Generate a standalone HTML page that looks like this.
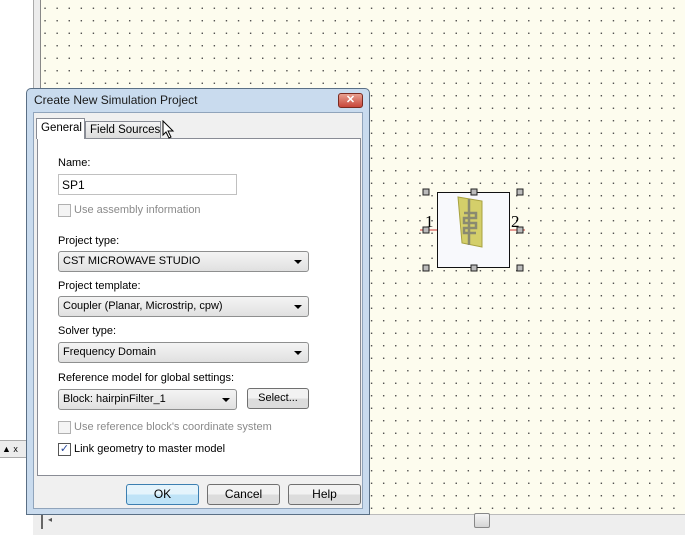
<!DOCTYPE html>
<html><head><style>
*{box-sizing:border-box;margin:0;padding:0}
body{width:685px;height:535px;position:relative;overflow:hidden;background:#fff;font-family:"Liberation Sans",sans-serif;font-size:12px;color:#000}
.canvas{position:absolute;left:41px;top:0;width:644px;height:514px;background-color:#fdfcee;background-image:radial-gradient(circle,#444 0.6px,transparent 0.9px);background-size:12.1px 12.5px;background-position:-2px 2px}
.vbar{position:absolute;left:33px;top:0;width:8px;height:535px;background:#ececec;border-left:1px solid #aaa;border-right:1px solid #888}
.abs{position:absolute}
.dlg{position:absolute;left:26px;top:88px;width:344px;height:427px;background:#c9dbee;border:1px solid #5a6f85;border-radius:5px 5px 0 0}
.title{position:absolute;left:7px;top:4px;font-size:12px;color:#1a1a1a}
.close{position:absolute;left:311px;top:4px;width:25px;height:15px;background:linear-gradient(#e8a090,#c8463a);border:1px solid #7a2a20;border-radius:3px;color:#fff;font-size:11px;text-align:center;line-height:13px;font-weight:bold}
.inner{position:absolute;left:6px;top:23px;width:330px;height:397px;background:#f0f0f0;border:1px solid #90a4bb}
.panel{position:absolute;left:3px;top:25px;width:324px;height:338px;background:#fff;border:1px solid #898c95}
.tab{position:absolute;height:20px;border:1px solid #898c95;border-bottom:none;padding:3px 4px;font-size:11.5px;white-space:nowrap}
.lbl{position:absolute;font-size:11px;white-space:nowrap}
.combo{position:absolute;height:21px;border:1px solid #8e8f8f;border-radius:3px;background:linear-gradient(#f4f4f4,#e0e0e0);font-size:11px;padding:3px 4px}
.combo:after{content:"";position:absolute;right:6px;top:8px;border-left:4px solid transparent;border-right:4px solid transparent;border-top:4px solid #000}
.btn{position:absolute;height:21px;border:1px solid #707070;border-radius:3px;background:linear-gradient(#f2f2f2 50%,#dcdcdc 50%);font-size:12px;text-align:center;line-height:19px}
.cb{position:absolute;width:13px;height:13px;border:1px solid #b0b0b0;background:#f4f4f4}
</style></head><body>
<div class="canvas"></div>
<div class="vbar"></div>
<div class="abs" style="left:437px;top:192px;width:73px;height:76px;background:#f8f9fc;border:1px solid #111"></div>
<svg class="abs" style="left:420px;top:185px" width="110" height="90">
<polygon points="38,12 62,16 62,62 42,58" fill="#d4cf6a" stroke="#a8a240"/>
<g stroke="#8a8a70" stroke-width="2.5" fill="none"><line x1="49" y1="14" x2="49" y2="60"/><path d="M44,28h12v5h-12v5h12v5h-12v5h12"/></g>
<line x1="0" y1="45" x2="17" y2="45" stroke="#c33"/><line x1="90" y1="45" x2="105" y2="45" stroke="#c33"/>
<g fill="#bbb" stroke="#222"><rect x="3" y="4" width="6" height="6"/><rect x="51" y="4" width="6" height="6"/><rect x="97" y="4" width="6" height="6"/><rect x="3" y="42" width="6" height="6"/><rect x="97" y="42" width="6" height="6"/><rect x="3" y="80" width="6" height="6"/><rect x="51" y="80" width="6" height="6"/><rect x="97" y="80" width="6" height="6"/></g>
<text x="5" y="42" font-family="Liberation Serif" font-size="17">1</text><text x="91" y="42" font-family="Liberation Serif" font-size="17">2</text>
</svg>
<div class="abs" style="left:0;top:440px;width:26px;height:18px;background:#ececec;border-top:1px solid #aaa;border-bottom:1px solid #aaa;font-size:9px;padding:3px 2px">▲ x</div>
<div class="abs" style="left:33px;top:514px;width:652px;height:21px;background:#eee;border-top:1px solid #bbb"></div>
<div class="abs" style="left:41px;top:515px;width:2px;height:14px;background:#666"></div>
<div class="abs" style="left:48px;top:515px;font-size:8px;color:#555">◂</div>
<div class="abs" style="left:474px;top:513px;width:16px;height:15px;background:linear-gradient(#f5f5f5,#d5d5d5);border:1px solid #888;border-radius:2px"></div>
<div class="dlg">
<div class="title">Create New Simulation Project</div>
<div class="close">✕</div>
<div class="inner">
 <div class="panel"></div>
 <div class="tab" style="left:2px;top:5px;width:49px;height:21px;background:#fff;z-index:2">General</div>
 <div class="tab" style="left:51px;top:8px;width:76px;height:17px;background:linear-gradient(#f4f4f4,#dcdcdc);padding-top:2px">Field Sources</div>
 <svg class="abs" style="left:128px;top:7px" width="14" height="20"><path d="M1,1 L1,15 L4,12 L7,18 L9,17 L6,11 L11,11 Z" fill="#fff" stroke="#000"/></svg>
 <div class="lbl" style="left:24px;top:44px">Name:</div>
 <div class="abs" style="left:24px;top:61px;width:179px;height:21px;border:1px solid #c0c0c0;background:#fff;padding:3px 3px;font-size:12px">SP1</div>
 <div class="cb" style="left:24px;top:91px"></div>
 <div class="lbl" style="left:40px;top:91px;color:#8a8a8a">Use assembly information</div>
 <div class="lbl" style="left:24px;top:122px">Project type:</div>
 <div class="combo" style="left:24px;top:138px;width:251px">CST MICROWAVE STUDIO</div>
 <div class="lbl" style="left:24px;top:167px">Project template:</div>
 <div class="combo" style="left:24px;top:183px;width:251px">Coupler (Planar, Microstrip, cpw)</div>
 <div class="lbl" style="left:24px;top:212px">Solver type:</div>
 <div class="combo" style="left:24px;top:229px;width:251px">Frequency Domain</div>
 <div class="lbl" style="left:24px;top:259px">Reference model for global settings:</div>
 <div class="combo" style="left:24px;top:276px;width:179px">Block: hairpinFilter_1</div>
 <div class="btn" style="left:213px;top:275px;width:62px;font-size:11px">Select...</div>
 <div class="cb" style="left:24px;top:308px"></div>
 <div class="lbl" style="left:40px;top:308px;color:#8a8a8a">Use reference block's coordinate system</div>
 <div class="cb" style="left:24px;top:330px;border-color:#555;background:#fff;color:#2a4a9a;font-size:11px;line-height:10px;text-align:center">✓</div>
 <div class="lbl" style="left:40px;top:330px">Link geometry to master model</div>
 <div class="btn" style="left:92px;top:371px;width:73px;border-color:#3c7fb1;background:linear-gradient(#e5f4fc 50%,#bfe3f7 50%)">OK</div>
 <div class="btn" style="left:173px;top:371px;width:73px">Cancel</div>
 <div class="btn" style="left:254px;top:371px;width:73px">Help</div>
</div>
</div>
</body></html>
